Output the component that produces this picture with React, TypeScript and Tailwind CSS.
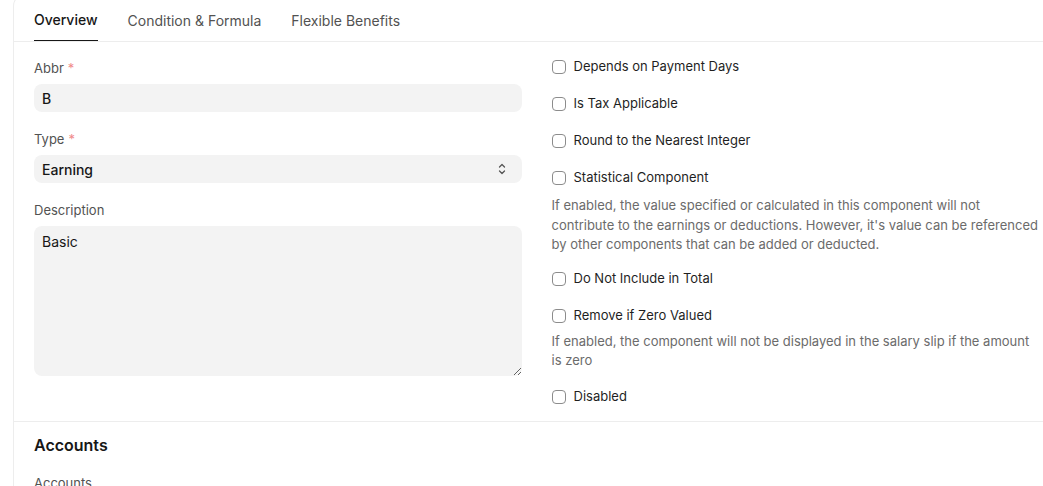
import React from "react";

const font = { fontFamily: "Inter, 'Noto Sans', sans-serif" };

function Label({ text, required }: { text: string; required?: boolean }) {
  return (
    <div className="mb-2 h-4 text-[13px] leading-4 text-[#525252]">
      {text}
      {required && <span className="ml-1 text-[#f08a8a]">*</span>}
    </div>
  );
}

function Check({ label }: { label: string }) {
  return (
    <label className="flex h-5 items-center gap-2">
      <span className="h-[14px] w-[14px] rounded-[4px] border border-[#8c8c8c] bg-white" />
      <span className="text-[13px] font-normal text-[#1f1f1f]">{label}</span>
    </label>
  );
}

function Help({ children }: { children: React.ReactNode }) {
  return <p className="text-[13px] leading-[1.5] text-[#6b6b6b]">{children}</p>;
}

export default function App() {
  return (
    <div className="h-screen w-screen overflow-hidden bg-white" style={font}>
      <div className="ml-[13px] -mt-[6px] w-[1046px] rounded-tl-xl border-l border-t border-[#ededed]">
        {/* tabs */}
        <div className="flex h-[47px] items-end gap-[30px] border-b border-[#ededed] px-5 text-[14px]">
          <div className="flex h-[41px] items-center border-b border-[#171717] pb-[1px] font-medium text-[#171717]">
            Overview
          </div>
          <div className="flex h-[41px] items-center pb-[1px] text-[#525252]">Condition &amp; Formula</div>
          <div className="flex h-[41px] items-center pb-[1px] text-[#525252]">Flexible Benefits</div>
        </div>

        {/* overview section */}
        <div className="grid grid-cols-2 gap-[30px] border-b border-[#ededed] px-5 pb-[14px] pt-[15px]">
          <div className="pt-[3px]">
            <Label text="Abbr" required />
            <div className="flex h-7 items-center rounded-lg bg-[#f3f3f3] px-2 text-[14px] font-medium text-[#171717]">
              B
            </div>
            <div className="mt-[19px]">
              <Label text="Type" required />
              <div className="flex h-7 items-center justify-between rounded-lg bg-[#f3f3f3] px-2 text-[14px] font-medium text-[#171717]">
                <span>Earning</span>
                <svg width="12" height="16" viewBox="0 0 12 16" fill="none" stroke="#555" strokeWidth="1.3" strokeLinecap="round" strokeLinejoin="round" className="mr-[6px]">
                  <path d="M3.5 6 6 3.5 8.5 6" />
                  <path d="M3.5 10 6 12.5 8.5 10" />
                </svg>
              </div>
            </div>
            <div className="mt-[19px]">
              <Label text="Description" />
              <textarea
                defaultValue="Basic"
                className="block h-[150px] w-full rounded-lg bg-[#f3f3f3] px-2 py-[6px] text-[14px] leading-5 text-[#171717] outline-none"
                style={font}
              />
            </div>
          </div>

          <div className="flex flex-col">
            <Check label="Depends on Payment Days" />
            <div className="mt-[17px]">
              <Check label="Is Tax Applicable" />
            </div>
            <div className="mt-[17px]">
              <Check label="Round to the Nearest Integer" />
            </div>
            <div className="mt-[17px]">
              <Check label="Statistical Component" />
            </div>
            <div className="mt-2">
              <Help>
                If enabled, the value specified or calculated in this component will not contribute to the earnings or
                deductions. However, it's value can be referenced by other components that can be added or deducted.
              </Help>
            </div>
            <div className="mt-[14px]">
              <Check label="Do Not Include in Total" />
            </div>
            <div className="mt-[17px]">
              <Check label="Remove if Zero Valued" />
            </div>
            <div className="mt-[6px]">
              <Help>If enabled, the component will not be displayed in the salary slip if the amount is zero</Help>
            </div>
            <div className="mt-[16px]">
              <Check label="Disabled" />
            </div>
          </div>
        </div>

        {/* accounts section */}
        <div className="px-5 pt-3">
          <h2 className="h-[22px] text-[16px] font-semibold leading-[22px] text-[#171717]">Accounts</h2>
          <div className="mt-[19px]">
            <Label text="Accounts" />
          </div>
        </div>
      </div>
    </div>
  );
}
